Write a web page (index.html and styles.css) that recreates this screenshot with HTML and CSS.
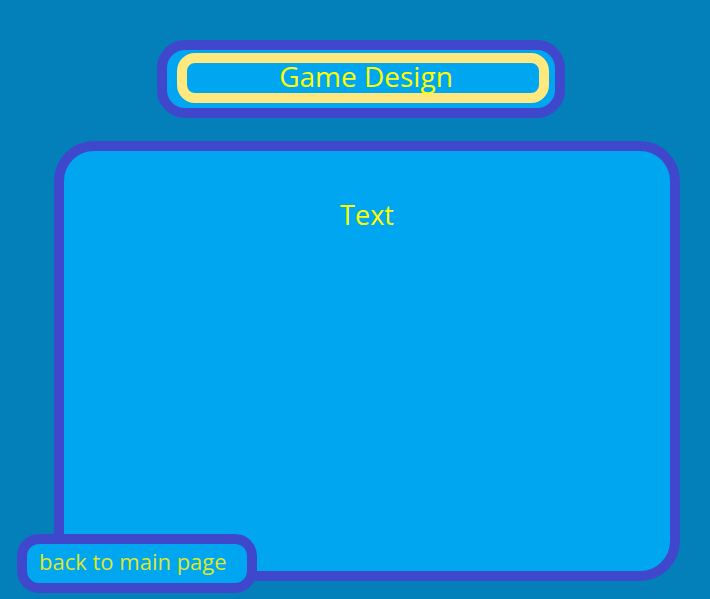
FILE: index.html
```html
<!DOCTYPE html>
<html lang="en">
<head>
<meta charset="utf-8">
<title>Game Design</title>
<link rel="stylesheet" href="styles.css">
</head>
<body>
<div class="page">
  <header class="header">
    <h1 class="title">Game Design</h1>
  </header>
  <main class="main">
    <p class="text">Text</p>
  </main>
  <a class="back" href="#">back to main page</a>
</div>
</body>
</html>
```
FILE: styles.css
```css
* { box-sizing: border-box; }
html, body {
  margin: 0;
  padding: 0;
}
body {
  background: #0380b9;
  font-family: "Open Sans", "Noto Sans", sans-serif;
  height: 599px;
  overflow: hidden;
}
.page {
  position: relative;
  padding-top: 40px;
  height: 599px;
}
.header {
  margin-left: 157px;
  width: 408px;
  height: 78px;
  border: 10px solid #3f48cc;
  border-radius: 28px;
  background: #00a6f0;
  padding: 3px 6px 5px 10px;
}
.title {
  margin: 0;
  height: 50px;
  border: 10px solid #ffe97f;
  border-radius: 18px;
  color: #ffff00;
  font-weight: 400;
  font-size: 28px;
  line-height: 26px;
  text-align: center;
  padding-left: 6px;
  white-space: nowrap;
}
.main {
  margin-top: 23px;
  margin-left: 54px;
  width: 626px;
  height: 440px;
  border: 10px solid #3f48cc;
  border-radius: 40px;
  background: #00a6f0;
  padding-top: 46px;
}
.text {
  margin: 0;
  color: #ffff00;
  font-size: 27px;
  line-height: 36px;
  text-align: center;
}
.back {
  position: absolute;
  left: 17px;
  top: 534px;
  width: 240px;
  height: 59px;
  border: 10px solid #3f48cc;
  border-radius: 22px;
  background: #00a6f0;
  padding-left: 12px;
  color: #dde82a;
  font-size: 22px;
  line-height: 35px;
  text-decoration: none;
  white-space: nowrap;
}
```
